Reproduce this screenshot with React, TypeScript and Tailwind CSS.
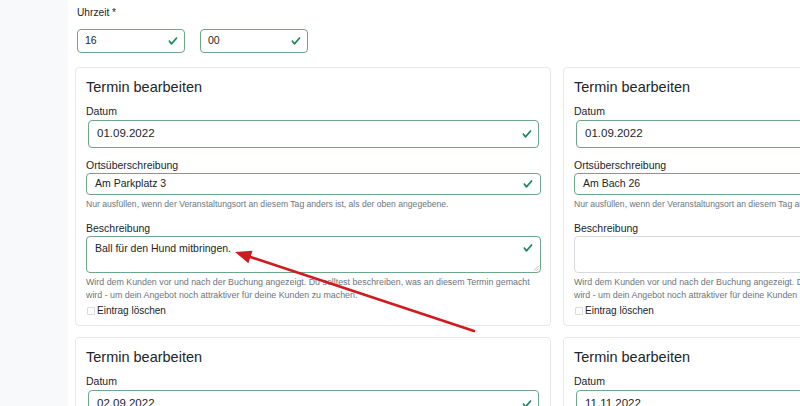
import React from "react";

const Check = ({ className = "" }: { className?: string }) => (
  <svg viewBox="0 0 8 8" className={className} aria-hidden="true">
    <path
      fill="#198754"
      d="M2.3 6.73.6 4.53c-.4-1.04.46-1.4 1.1-.8l1.1 1.4 3.4-3.8c.6-.63 1.6-.27 1.2.7l-4 4.6c-.43.5-.8.4-1.1.1z"
    />
  </svg>
);

type CardProps = { date: string; ort: string; desc: string; descValid: boolean };

const Card = ({ date, ort, desc, descValid }: CardProps) => (
  <div className="w-[476px] h-[259px] shrink-0 border border-[#e6e8ea] rounded-[4px] bg-white pt-[9px] pl-[10px] pr-[9px] flex flex-col">
    <div className="text-[14.5px] leading-[20px] text-[#212529]">Termin bearbeiten</div>
    <div className="mt-[8px] text-[10.5px] leading-[12px] text-[#212529]">Datum</div>
    <div className="mt-[3px] mx-[2px] h-[28px] border border-[#6fa58b] rounded-[4px] flex items-center justify-between pl-[8px] pr-[6px]">
      <span className="text-[11.5px] text-[#212529]">{date}</span>
      <Check className="w-[10px] h-[10px]" />
    </div>
    <div className="mt-[11px] text-[10.5px] leading-[12px] text-[#212529]">Ortsüberschreibung</div>
    <div className="mt-[2px] h-[22px] border border-[#6fa58b] rounded-[4px] flex items-center justify-between pl-[8px] pr-[7px]">
      <span className="text-[10.5px] text-[#212529]">{ort}</span>
      <Check className="w-[10px] h-[10px]" />
    </div>
    <div className="mt-[3px] text-[8.6px] leading-[12px] text-[#6c757d] whitespace-nowrap">
      Nur ausfüllen, wenn der Veranstaltungsort an diesem Tag anders ist, als der oben angegebene.
    </div>
    <div className="mt-[12px] text-[10.5px] leading-[12px] text-[#212529]">Beschreibung</div>
    <div
      className={
        descValid
          ? "relative mt-[2px] h-[37px] border border-[#6fa58b] rounded-[4px] flex items-start justify-between pl-[8px] pr-[7px] pt-[5px]"
          : "relative mt-[2px] h-[37px] border border-[#d5d9dd] rounded-[4px] flex items-start justify-between pl-[8px] pr-[7px] pt-[5px]"
      }
    >
      <span className="text-[10.5px] leading-[13px] text-[#212529]">{desc}</span>
      {descValid && <Check className="w-[10px] h-[10px] mt-[1px]" />}
      <svg viewBox="0 0 6 6" className="absolute right-[1px] bottom-[1px] w-[6px] h-[6px]" aria-hidden="true">
        <path d="M5.5 1 L1 5.5 M5.5 3.5 L3.5 5.5" stroke="#9aa0a6" strokeWidth="0.7" />
      </svg>
    </div>
    <div className="mt-[3px] text-[8.85px] leading-[13px] text-[#6c757d] whitespace-nowrap">
      <div>Wird dem Kunden vor und nach der Buchung angezeigt. Du solltest beschreiben, was an diesem Termin gemacht</div>
      <div>wird - um dein Angebot noch attraktiver für deine Kunden zu machen.</div>
    </div>
    <div className="mt-[2px] flex items-center gap-[2px] h-[13px]">
      <span className="ml-[1px] w-[8px] h-[8px] border border-[#d8dcdf] rounded-[1px] bg-white" />
      <span className="text-[10px] leading-[13px] text-[#212529]">Eintrag löschen</span>
    </div>
  </div>
);

const SmallInput = ({ value }: { value: string }) => (
  <div className="w-[108px] h-[24px] border border-[#6fa58b] rounded-[4px] flex items-center justify-between pl-[7px] pr-[6px]">
    <span className="text-[10.5px] text-[#212529]">{value}</span>
    <Check className="w-[10px] h-[10px]" />
  </div>
);

export default function App() {
  return (
    <div
      className="relative w-[800px] h-[406px] overflow-hidden bg-white flex"
      style={{ fontFamily: '"Liberation Sans", Arial, sans-serif' }}
    >
      <div className="w-[68px] shrink-0 bg-[#f8f9fa]" />
      <div className="flex flex-col pl-[7px]">
        <div className="pl-[2px] pt-[7px]">
          <div className="text-[10.2px] leading-[12px] text-[#212529]">Uhrzeit *</div>
          <div className="mt-[10px] flex gap-[15px]">
            <SmallInput value="16" />
            <SmallInput value="00" />
          </div>
        </div>
        <div className="mt-[14px] grid grid-cols-[476px_476px] gap-x-[12px] gap-y-[11px]">
          <Card date="01.09.2022" ort="Am Parkplatz 3" desc="Ball für den Hund mitbringen." descValid />
          <Card date="01.09.2022" ort="Am Bach 26" desc="" descValid={false} />
          <Card date="02.09.2022" ort="" desc="" descValid={false} />
          <Card date="11.11.2022" ort="" desc="" descValid={false} />
        </div>
      </div>
      <svg className="absolute left-0 top-0 w-[800px] h-[406px] pointer-events-none" viewBox="0 0 800 406" aria-hidden="true">
        <line x1="474" y1="331" x2="249" y2="256.5" stroke="#cf1a1f" strokeWidth="2.6" strokeLinecap="round" />
        <polygon points="235,252 252.5,250.8 248.4,263.2" fill="#cf1a1f" />
      </svg>
    </div>
  );
}
